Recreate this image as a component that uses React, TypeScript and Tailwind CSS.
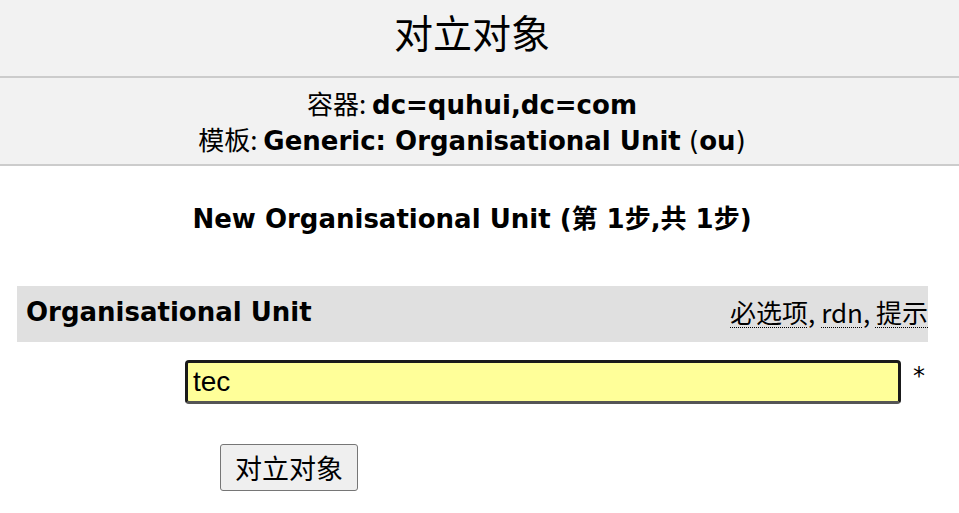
import React from "react";

const F = { fontFamily: '"DejaVu Sans", "Noto Sans CJK SC", sans-serif' };

export default function App() {
  return (
    <div className="w-[959px] h-[513px] bg-white text-black overflow-hidden" style={F}>
      <div className="h-[78px] bg-[#f2f2f2] border-b-2 border-[#cccccc]">
        <div className="w-[944px] h-full flex items-center justify-center">
          <div className="text-[39px] leading-none pb-[14px]" style={{ fontFamily: '"Noto Sans CJK SC", sans-serif' }}>对立对象</div>
        </div>
      </div>
      <div className="h-[88px] bg-[#f2f2f2] border-b-2 border-[#cccccc]">
        <div className="w-[944px] flex flex-col items-center pt-[8px] text-[26px] leading-[34px]">
          <div>
            <span style={{ fontFamily: '"Noto Sans CJK SC", sans-serif' }}>容器: </span>
            <b>dc=quhui,dc=com</b>
          </div>
          <div>
            <span style={{ fontFamily: '"Noto Sans CJK SC", sans-serif' }}>模板: </span>
            <b>Generic: Organisational Unit</b> (<b>ou</b>)
          </div>
        </div>
      </div>
      <div className="w-[944px] mt-[38px] text-center text-[26px] leading-[30px] font-bold">
        New Organisational Unit (第 1步,共 1步)
      </div>
      <div className="mt-[52px] ml-[17px] w-[911px] h-[56px] bg-[#e0e0e0] flex items-center justify-between pl-[9px] pb-[4px]">
        <div className="text-[26px] font-bold">Organisational Unit</div>
        <div className="text-[26px] leading-none" style={{ fontFamily: '"Noto Sans CJK SC", "DejaVu Sans", sans-serif' }}>
          <span className="underline decoration-dotted decoration-1 underline-offset-[4px]">必选项</span>,{" "}
          <span className="underline decoration-dotted decoration-1 underline-offset-[4px]">rdn</span>,{" "}
          <span className="underline decoration-dotted decoration-1 underline-offset-[4px]">提示</span>
        </div>
      </div>
      <div className="mt-[18px] flex items-start">
        <div className="ml-[185px] w-[716px] h-[44px] bg-[#ffff99] border-[3px] border-[#1a1a1a] border-b-[#555555] rounded-[4px] flex items-center pl-[5px] text-[28px]" style={{ fontFamily: '"Liberation Sans", Arial, sans-serif' }}>
          tec
        </div>
        <div className="ml-[12px] text-[24px] leading-none mt-[4px]">*</div>
      </div>
      <div className="mt-[40px] ml-[220px]">
        <button className="w-[138px] h-[47px] bg-[#efefef] border border-[#767676] rounded-[3px] text-[27px] leading-none" style={{ fontFamily: '"Noto Sans CJK SC", sans-serif' }}>
          对立对象
        </button>
      </div>
    </div>
  );
}
